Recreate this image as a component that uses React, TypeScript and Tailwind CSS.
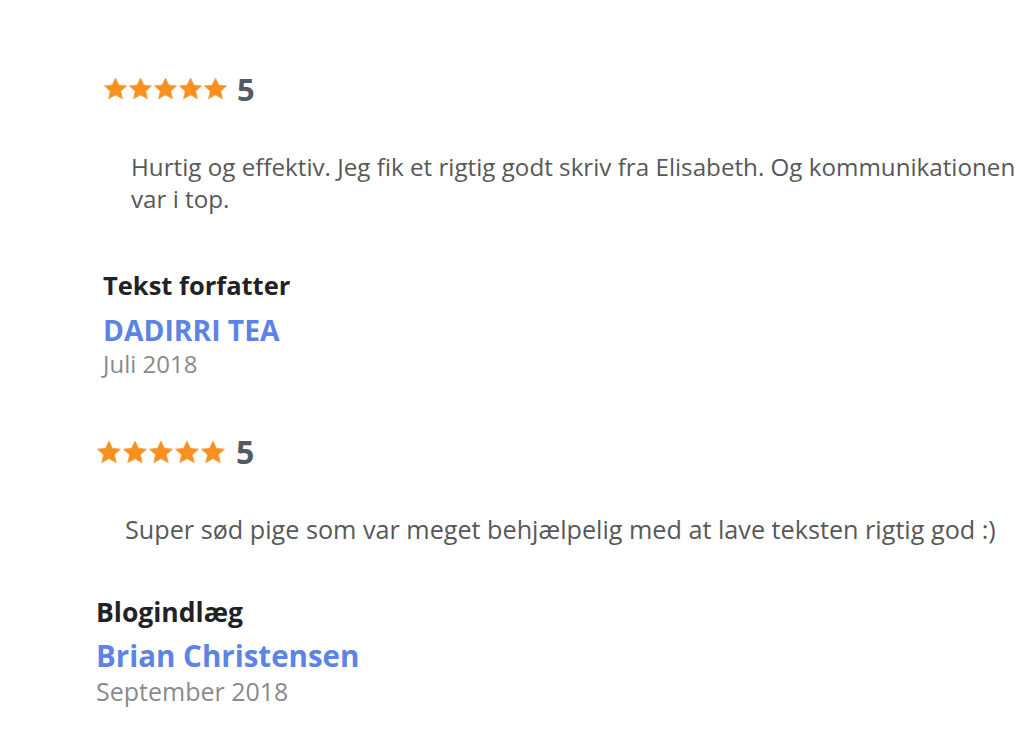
import React from "react";

function Star({ size }: { size: number }) {
  return (
    <svg width={size} height={size * 0.95} viewBox="0 0 24 23" className="shrink-0">
      <path
        d="M12 1l3.2 6.8 7.5.8-5.6 5.1 1.6 7.4L12 17.4l-6.7 3.7 1.6-7.4-5.6-5.1 7.5-.8z"
        fill="#f7901e"
        stroke="#f6a552"
        strokeWidth="0.9"
        strokeLinejoin="round"
      />
    </svg>
  );
}

function Rating({ size, mt, numClass }: { size: number; mt: string; numClass: string }) {
  return (
    <div className={`flex items-center h-[30px] ${mt}`}>
      <div className="flex">
        <Star size={size} />
        <Star size={size} />
        <Star size={size} />
        <Star size={size} />
        <Star size={size} />
      </div>
      <span className={`font-bold leading-[30px] text-[#545a60] ${numClass}`}>5</span>
    </div>
  );
}

export default function App() {
  return (
    <div className="w-[1024px] h-[750px] bg-white font-['Open_Sans',sans-serif] overflow-hidden">
      <div className="pl-[103px]">
        <Rating size={25} mt="mt-[74px]" numClass="ml-[9px] text-[31px]" />
        <p className="mt-[47px] pl-[28px] text-[24.2px] leading-[32px] text-[#585858]">
          Hurtig og effektiv. Jeg fik et rigtig godt skriv fra Elisabeth. Og kommunikationen var i top.
        </p>
        <div className="mt-[55px] text-[25.5px] font-bold leading-[30px] text-[#1f2326]">Tekst forfatter</div>
        <div className="mt-[13px] text-[28.3px] font-bold leading-[34px] text-[#5b84e4]">DADIRRI TEA</div>
        <div className="mt-[2px] text-[24px] leading-[30px] text-[#8a8a8a]">Juli 2018</div>
      </div>
      <div className="pl-[96px]">
        <Rating size={26} mt="mt-[58px]" numClass="ml-[10px] text-[32px]" />
        <p className="mt-[46px] pl-[29px] text-[25.2px] leading-[32px] text-[#585858]">
          Super sød pige som var meget behjælpelig med at lave teksten rigtig god :)
        </p>
        <div className="mt-[52px] text-[26.5px] font-bold leading-[30px] text-[#1f2326]">Blogindlæg</div>
        <div className="mt-[12px] text-[29.5px] font-bold leading-[33px] text-[#5b84e4]">Brian Christensen</div>
        <div className="mt-[4px] text-[25px] leading-[30px] text-[#8a8a8a]">September 2018</div>
      </div>
    </div>
  );
}
